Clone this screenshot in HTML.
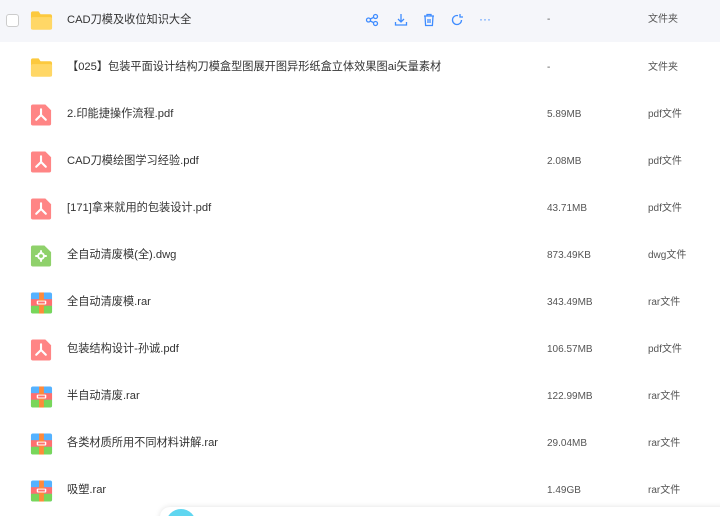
<!DOCTYPE html>
<html><head><meta charset="utf-8"><style>
html,body{margin:0;width:720px;height:516px;overflow:hidden}
body{background:#fff;font-family:"Liberation Sans","Noto Sans CJK SC",sans-serif;font-size:11px;color:#333;position:relative}
.row{position:absolute;left:0;width:720px;height:47px}
.row .t{position:absolute;left:67px;top:0;line-height:47px;font-size:11.2px}
.row .s{position:absolute;left:547px;line-height:47px;font-size:10px;color:#555}
.row .k{position:absolute;left:648px;line-height:47px;font-size:10px;color:#555}
.ic{position:absolute;left:30px;top:12px;width:23px;height:24px}
.hl{background:#f5f6fa;height:42px}
</style></head><body>
<div class="row hl" style="top:0">
<div style="position:absolute;left:6px;top:14px;width:11px;height:11px;border:1px solid #ccc;border-radius:3px;background:#fff"></div>
<svg class="ic" style="top:9px" viewBox="0 0 24 24"><path d="M1 4a2 2 0 0 1 2-2h6l2 3h10a2 2 0 0 1 2 2v12a2 2 0 0 1-2 2H3a2 2 0 0 1-2-2z" fill="#fcc93e"/><rect x="1" y="8" width="22" height="13" rx="2" fill="#ffd766"/></svg>
<div class="t" style="line-height:40px">CAD刀模及收位知识大全</div>
<svg style="position:absolute;left:365px;top:13px" width="14" height="14" viewBox="0 0 14 14" fill="none" stroke="#3f8cff" stroke-width="1.3"><circle cx="3.5" cy="7" r="2"/><circle cx="10.5" cy="3.5" r="2"/><circle cx="10.5" cy="10.5" r="2"/><path d="M5.3 6l3.4-1.7M5.3 8l3.4 1.7"/></svg>
<svg style="position:absolute;left:394px;top:13px" width="14" height="14" viewBox="0 0 14 14" fill="none" stroke="#3f8cff" stroke-width="1.3"><path d="M7 1v8M4 6l3 3 3-3M1.5 9v3h11V9"/></svg>
<svg style="position:absolute;left:422px;top:13px" width="14" height="14" viewBox="0 0 14 14" fill="none" stroke="#3f8cff" stroke-width="1.3"><path d="M2 3h10M5 3V1.5h4V3M3 3l.6 9.5h6.8L11 3M6 6v4M8 6v4"/></svg>
<svg style="position:absolute;left:450px;top:13px" width="14" height="14" viewBox="0 0 14 14" fill="none" stroke="#3f8cff" stroke-width="1.3"><path d="M11.5 7A4.5 4.5 0 1 1 8 2.6M10 1v3h3"/></svg>
<div style="position:absolute;left:479px;top:12px;color:#3f8cff;font-size:12px">···</div>
<div class="s" style="line-height:40px">-</div><div class="k" style="line-height:40px">文件夹</div>
</div>
<div class="row" style="top:44px">
<svg class="ic" viewBox="0 0 24 24"><path d="M1 4a2 2 0 0 1 2-2h6l2 3h10a2 2 0 0 1 2 2v12a2 2 0 0 1-2 2H3a2 2 0 0 1-2-2z" fill="#fcc93e"/><rect x="1" y="8" width="22" height="13" rx="2" fill="#ffd766"/></svg>
<div class="t">【025】包装平面设计结构刀模盒型图展开图异形纸盒立体效果图ai矢量素材</div><div class="s">-</div><div class="k">文件夹</div></div>

<div id="rows"></div>
<script>
var pdf='<svg class="ic" viewBox="0 0 24 24"><path d="M3 1h13l6 6v14a2 2 0 0 1-2 2H3a2 2 0 0 1-2-2V3a2 2 0 0 1 2-2z" fill="#ff8585"/><path d="M11.5 6v6M11.5 12l-5 5M11.5 12l5 5" stroke="#fff" stroke-width="2.2" fill="none" stroke-linecap="round"/></svg>';
var dwg='<svg class="ic" viewBox="0 0 24 24"><path d="M3 1h12l7 7v13a2 2 0 0 1-2 2H3a2 2 0 0 1-2-2V3a2 2 0 0 1 2-2z" fill="#8fd16b"/><circle cx="11.5" cy="12" r="3" fill="none" stroke="#fff" stroke-width="2"/><path d="M11.5 6v3M11.5 15v3M5.5 12h3M14.5 12h3" stroke="#fff" stroke-width="2"/></svg>';
var rar='<svg class="ic" viewBox="0 0 24 24"><rect x="1" y="1" width="22" height="22" rx="2" fill="#55b2ff"/><rect x="1" y="8" width="22" height="7" fill="#ff6f6f"/><rect x="1" y="15" width="22" height="8" rx="2" fill="#78d65a"/><rect x="1" y="15" width="22" height="3" fill="#78d65a"/><rect x="9.5" y="1" width="5" height="22" fill="#ff8a3a"/><rect x="7" y="9.5" width="10" height="4" rx="1" fill="#fff"/><rect x="8.5" y="10.5" width="7" height="2" fill="#ff6f6f"/></svg>';
var d=[[pdf,'2.印能捷操作流程.pdf','5.89MB','pdf文件'],[pdf,'CAD刀模绘图学习经验.pdf','2.08MB','pdf文件'],[pdf,'[171]拿来就用的包装设计.pdf','43.71MB','pdf文件'],[dwg,'全自动清废模(全).dwg','873.49KB','dwg文件'],[rar,'全自动清废模.rar','343.49MB','rar文件'],[pdf,'包装结构设计-孙诚.pdf','106.57MB','pdf文件'],[rar,'半自动清废.rar','122.99MB','rar文件'],[rar,'各类材质所用不同材料讲解.rar','29.04MB','rar文件'],[rar,'吸塑.rar','1.49GB','rar文件']];
var h='';d.forEach(function(r,i){h+='<div class="row" style="top:'+(91+i*47)+'px">'+r[0]+'<div class="t">'+r[1]+'</div><div class="s">'+r[2]+'</div><div class="k">'+r[3]+'</div></div>';});
document.getElementById('rows').innerHTML=h;
</script>
<div style="position:absolute;left:160px;top:507px;width:600px;height:30px;background:#fff;border-radius:10px;box-shadow:0 0 6px rgba(0,0,0,.12)"></div>
<div style="position:absolute;left:166px;top:509px;width:30px;height:30px;border-radius:50%;background:#5fd6f0"></div>
</body></html>
